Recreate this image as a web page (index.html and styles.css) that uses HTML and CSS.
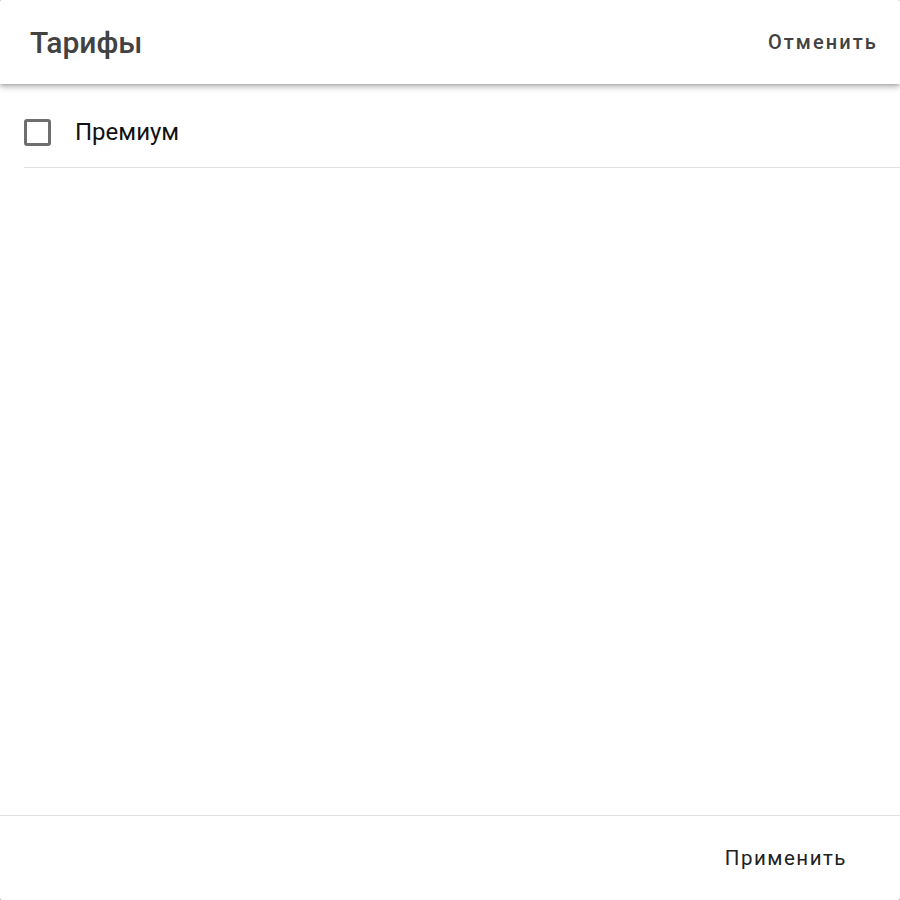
FILE: index.html
```html
<!DOCTYPE html>
<html lang="ru">
<head>
<meta charset="utf-8">
<title>Тарифы</title>
<link rel="stylesheet" href="styles.css">
</head>
<body>
<div class="dialog">
  <header class="bar">
    <h1 class="title">Тарифы</h1>
    <button class="btn btn-cancel">Отменить</button>
  </header>
  <main class="content">
    <ul class="list">
      <li class="item">
        <span class="checkbox"></span>
        <span class="label">Премиум</span>
      </li>
    </ul>
  </main>
  <footer class="actions">
    <button class="btn btn-apply">Применить</button>
  </footer>
</div>
</body>
</html>
```
FILE: styles.css
```css
html, body {
  margin: 0;
  padding: 0;
  height: 100%;
  background: #9e9e9e;
}
body {
  font-family: Roboto, "Noto Sans", sans-serif;
}
.dialog {
  height: 900px;
  width: 900px;
  background: #fff;
  border-radius: 2px;
  display: flex;
  flex-direction: column;
  overflow: hidden;
}
.bar {
  height: 84px;
  flex: 0 0 84px;
  display: flex;
  align-items: center;
  justify-content: space-between;
  padding: 0 22px 0 30px;
  box-sizing: border-box;
  background: #fff;
  box-shadow: 0 3px 6px rgba(0,0,0,0.28), 0 1px 2px rgba(0,0,0,0.12);
  position: relative;
  z-index: 1;
}
.title {
  margin: 0;
  font-size: 30px;
  font-weight: 500;
  color: #424242;
}
.btn {
  background: none;
  border: 0;
  padding: 0;
  font-family: Roboto, "Noto Sans", sans-serif;
  cursor: pointer;
}
.btn-cancel {
  font-size: 20px;
  font-weight: 500;
  letter-spacing: 2.1px;
  color: #424242;
}
.content {
  flex: 1;
  padding: 13px 0 0 24px;
}
.list {
  list-style: none;
  margin: 0;
  padding: 0;
}
.item {
  display: flex;
  align-items: center;
  height: 70px;
  border-bottom: 1px solid #e0e0e0;
  gap: 24px;
}
.checkbox {
  width: 27px;
  height: 27px;
  box-sizing: border-box;
  border: 3px solid #6e6e6e;
  border-radius: 3px;
}
.label {
  font-size: 24px;
  color: #111;
}
.actions {
  flex: 0 0 84px;
  border-top: 1px solid #e0e0e0;
  display: flex;
  align-items: center;
  justify-content: flex-end;
  padding-right: 53px;
}
.btn-apply {
  font-size: 20.5px;
  letter-spacing: 1.5px;
  color: #212121;
}
```
